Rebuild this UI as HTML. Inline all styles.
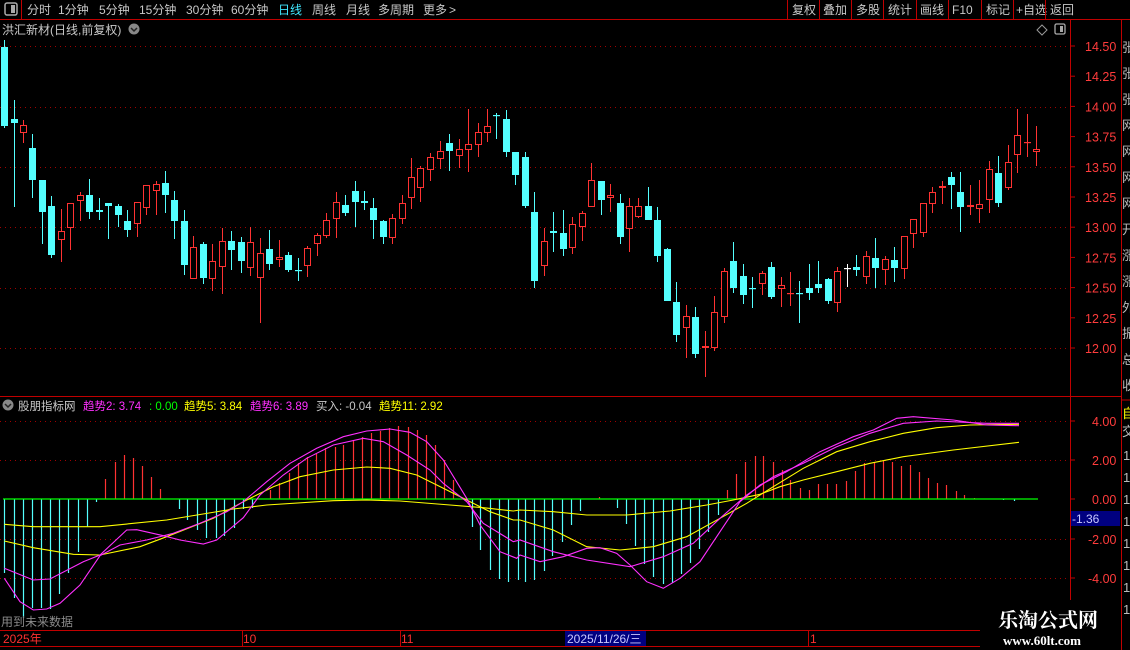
<!DOCTYPE html>
<html><head><meta charset="utf-8"><style>
html,body{margin:0;padding:0;background:#000;width:1130px;height:650px;overflow:hidden;font-family:"Liberation Sans","Noto Sans CJK SC",sans-serif}
svg{position:absolute;left:0;top:0}
</style></head><body>
<svg id="s" width="1130" height="650" xmlns="http://www.w3.org/2000/svg" font-family="Liberation Sans, Noto Sans CJK SC, sans-serif">
<rect width="1130" height="650" fill="#000"/>
<!-- toolbar -->
<line x1="0" y1="19.5" x2="1130" y2="19.5" stroke="#c00000"/>
<line x1="21.5" y1="0" x2="21.5" y2="19" stroke="#c00000"/>
<rect x="5" y="3" width="12" height="12" rx="2" fill="none" stroke="#aaa" stroke-width="1.5"/>
<rect x="11" y="5" width="4" height="8" fill="#aaa"/>
<g font-size="12" fill="#c8c8c8">
<text x="27" y="14">分时</text><text x="58" y="14">1分钟</text><text x="99" y="14">5分钟</text><text x="139" y="14">15分钟</text><text x="186" y="14">30分钟</text><text x="231" y="14">60分钟</text>
<text x="278" y="14" fill="#40e8ff">日线</text><text x="312" y="14">周线</text><text x="346" y="14">月线</text><text x="378" y="14">多周期</text><text x="423" y="14">更多</text><text x="449" y="14">&gt;</text>
<text x="792" y="14">复权</text><text x="823" y="14">叠加</text><text x="856" y="14">多股</text><text x="888" y="14">统计</text><text x="920" y="14">画线</text><text x="952" y="14">F10</text><text x="986" y="14">标记</text><text x="1016" y="14">+自选</text><text x="1050" y="14">返回</text>
</g>
<g stroke="#c00000"><line x1="787.5" y1="0" x2="787.5" y2="19"/><line x1="819.5" y1="0" x2="819.5" y2="19"/><line x1="851.5" y1="0" x2="851.5" y2="19"/><line x1="883.5" y1="0" x2="883.5" y2="19"/><line x1="916.5" y1="0" x2="916.5" y2="19"/><line x1="948.5" y1="0" x2="948.5" y2="19"/><line x1="981.5" y1="0" x2="981.5" y2="19"/><line x1="1013.5" y1="0" x2="1013.5" y2="19"/><line x1="1045.5" y1="0" x2="1045.5" y2="19"/></g>
<!-- title -->
<text x="2" y="34" font-size="12" fill="#c8c8c8">洪汇新材(日线,前复权)</text>
<circle cx="134" cy="29" r="5.5" fill="#888"/><path d="M131 28l3 3 3-3" stroke="#222" stroke-width="1.5" fill="none"/>
<path d="M1042 25l5 5-5 5-5-5z" fill="none" stroke="#999"/>
<rect x="1055" y="24" width="10" height="10" rx="1.5" fill="none" stroke="#aaa" stroke-width="1.3"/><rect x="1060" y="26" width="3" height="6" fill="#aaa"/>
<!-- frame lines -->
<line x1="1070.5" y1="20" x2="1070.5" y2="600" stroke="#c00000"/>
<line x1="1121.5" y1="20" x2="1121.5" y2="650" stroke="#c00000"/>
<line x1="0" y1="396.5" x2="1121" y2="396.5" stroke="#c00000"/>
<line x1="0" y1="630.5" x2="980" y2="630.5" stroke="#c00000"/>
<line x1="0" y1="646.5" x2="980" y2="646.5" stroke="#c00000"/>
<g id="grid"></g>
<g id="ax" font-size="12.5" fill="#ff3c3c"></g>
<g id="ind"></g>
<g id="cand"></g>
<!-- indicator header -->
<circle cx="8" cy="405" r="5.5" fill="#888"/><path d="M5 404l3 3 3-3" stroke="#222" stroke-width="1.5" fill="none"/>
<g font-size="11.5">
<text x="18" y="410" fill="#c8c8c8">股朋指标网</text>
<text x="83" y="410" fill="#ff30ff">趋势2: 3.74</text>
<text x="149" y="410" fill="#00ff00">: 0.00</text>
<text x="184" y="410" fill="#ffff00">趋势5: 3.84</text>
<text x="250" y="410" fill="#ff30ff">趋势6: 3.89</text>
<text x="316" y="410" fill="#c8c8c8">买入: -0.04</text>
<text x="379" y="410" fill="#ffff00">趋势11: 2.92</text>
</g>
<rect x="1071" y="511" width="49" height="15" fill="#000080"/>
<text x="1072" y="523" font-size="12" fill="#c8c8ff">-1.36</text>
<text x="1" y="626" font-size="12" fill="#8a8a8a">用到未来数据</text>
<!-- time axis -->
<g font-size="12" fill="#ff3030">
<text x="3" y="643">2025年</text><text x="243" y="643">10</text><text x="401" y="643">11</text><text x="810" y="643">1</text></g>
<line x1="242.5" y1="631" x2="242.5" y2="646" stroke="#c00000"/><line x1="400.5" y1="631" x2="400.5" y2="646" stroke="#c00000"/><line x1="808.5" y1="631" x2="808.5" y2="646" stroke="#c00000"/>
<rect x="565" y="631" width="81" height="15" fill="#000080"/>
<text x="567" y="643" font-size="12" fill="#c8c8ff">2025/11/26/三</text>
<!-- right strip -->
<g font-size="13" fill="#bbb"><text x="1122" y="52">张</text><text x="1122" y="78">张</text><text x="1122" y="104">张</text><text x="1122" y="130">网</text><text x="1122" y="156">网</text><text x="1122" y="182">网</text><text x="1122" y="208">网</text><text x="1122" y="234">开</text><text x="1122" y="260">涨</text><text x="1122" y="286">涨</text><text x="1122" y="312">外</text><text x="1122" y="338">振</text><text x="1122" y="364">总</text><text x="1122" y="390">收</text>
<text x="1122" y="418" fill="#ff0">自</text><text x="1122" y="436">交</text>
<text x="1123" y="460">1</text><text x="1123" y="482">1</text><text x="1123" y="504">1</text><text x="1123" y="526">1</text><text x="1123" y="548">1</text><text x="1123" y="570">1</text><text x="1123" y="592">1</text><text x="1123" y="614">1</text></g>
<line x1="1121" y1="400" x2="1130" y2="400" stroke="#c00000"/>
<rect x="985" y="601" width="136" height="49" fill="#000"/>
<text x="998" y="627" font-size="20" font-weight="bold" fill="#fff" font-family="Liberation Serif, Noto Serif CJK SC, serif">乐淘公式网</text>
<text x="1003" y="645" font-size="13" font-weight="bold" fill="#fff" font-family="Liberation Serif, serif">www.60lt.com</text>
</svg>
<script>
var NS="http://www.w3.org/2000/svg";
function el(p,t,a,txt){var e=document.createElementNS(NS,t);for(var k in a)e.setAttribute(k,a[k]);if(txt)e.textContent=txt;document.getElementById(p).appendChild(e);return e;}
[46,107,167,227,288,348,421,460,499,539,578].forEach(function(y){if(y!=499)el("grid","line",{x1:0,x2:1068,y1:y+.5,y2:y+.5,stroke:"#a00000","stroke-dasharray":"1 4"});});
var pl=["14.50","14.25","14.00","13.75","13.50","13.25","13.00","12.75","12.50","12.25","12.00"];
pl.forEach(function(t,i){var y=46+i*30.2;el("ax","text",{x:1085,y:y+5},t);el("ax","line",{x1:1071,x2:1075,y1:y,y2:y,stroke:"#c00000"});});
[["4.00",421],["2.00",460],["0.00",499],["-2.00",539],["-4.00",578]].forEach(function(a){el("ax","text",{x:a[0][0]=="-"?1088:1092,y:a[1]+5},a[0]);el("ax","line",{x1:1071,x2:1075,y1:a[1],y2:a[1],stroke:"#c00000"});});
// candles: x, bodyTop, bodyBot, wickTop, wickBot, color
var C=[[4,47,126,40,128,"c"],[14,119,123,100,207,"c"],[23,125,133,120,143,"r"],[32,148,180,134,198,"c"],[42,180,212,180,244,"c"],[51,206,255,196,258,"c"],[61,231,240,209,262,"r"],[70,203,228,203,250,"r"],[80,195,201,192,221,"r"],[89,195,212,179,219,"c"],[99,210,212,198,220,"c"],[108,203,206,203,239,"c"],[118,206,215,204,227,"c"],[127,221,230,210,237,"c"],[137,202,224,202,237,"r"],[146,185,208,185,215,"r"],[156,184,191,181,215,"r"],[165,183,195,171,213,"c"],[174,200,221,191,239,"c"],[184,221,265,210,275,"c"],[193,247,279,236,275,"r"],[203,244,278,242,284,"c"],[212,261,279,244,291,"r"],[222,241,267,228,294,"r"],[231,241,250,231,270,"c"],[241,242,261,237,273,"c"],[250,242,268,227,276,"r"],[260,253,278,238,323,"r"],[269,249,264,230,270,"c"],[279,257,260,240,267,"r"],[288,255,270,252,272,"c"],[298,270,271,258,281,"c"],[307,248,266,246,277,"r"],[317,235,244,233,256,"r"],[326,220,236,213,238,"r"],[336,202,219,192,238,"r"],[345,205,213,195,216,"c"],[355,191,202,181,227,"c"],[364,201,203,191,210,"c"],[373,208,220,198,239,"c"],[383,221,237,220,244,"c"],[392,218,238,214,244,"r"],[402,203,219,195,224,"r"],[411,177,198,158,209,"r"],[420,168,188,166,202,"r"],[430,157,170,153,181,"r"],[440,151,159,141,169,"r"],[449,143,151,134,171,"c"],[459,149,156,139,168,"r"],[468,144,150,109,172,"r"],[478,132,145,123,157,"r"],[487,126,133,109,142,"r"],[496,115,116,113,139,"c"],[506,119,152,110,157,"c"],[515,152,175,152,185,"c"],[525,157,206,152,208,"c"],[534,212,281,192,288,"c"],[544,241,266,228,276,"r"],[553,231,233,212,252,"c"],[563,233,249,210,256,"c"],[572,224,248,217,254,"r"],[582,213,227,211,241,"r"],[591,180,207,163,207,"r"],[601,181,200,181,215,"c"],[610,195,198,184,212,"r"],[620,203,237,194,244,"c"],[629,206,229,198,252,"r"],[638,206,217,198,218,"r"],[648,206,220,187,220,"c"],[657,220,256,207,262,"c"],[667,249,301,248,301,"c"],[676,302,335,282,342,"c"],[686,316,328,305,358,"r"],[695,317,354,307,358,"c"],[705,346,348,331,377,"r"],[714,312,348,296,351,"r"],[724,271,317,268,323,"r"],[733,261,288,242,293,"c"],[743,276,295,264,304,"c"],[752,288,289,277,308,"c"],[762,273,284,271,295,"r"],[771,267,297,262,299,"c"],[781,285,289,277,307,"r"],[790,293,294,272,306,"r"],[799,293,294,281,323,"c"],[809,288,293,264,300,"c"],[818,284,288,261,293,"c"],[828,279,301,278,304,"c"],[837,271,303,267,312,"r"],[847,268,268,264,287,"w"],[856,267,270,255,276,"c"],[866,256,277,251,284,"r"],[875,258,268,238,288,"c"],[885,259,270,256,285,"r"],[894,260,268,247,282,"c"],[904,236,269,236,279,"r"],[913,219,234,219,248,"r"],[923,203,233,203,237,"r"],[932,192,204,187,213,"r"],[942,186,188,181,204,"r"],[951,177,185,172,209,"c"],[960,192,207,172,232,"c"],[970,205,207,185,215,"r"],[979,204,209,180,223,"r"],[989,169,200,161,213,"r"],[998,173,203,156,207,"c"],[1008,162,188,145,190,"r"],[1017,135,155,109,173,"r"],[1027,142,143,114,157,"r"],[1036,149,152,126,166,"r"]];
var col={c:"#54ffff",r:"#ff3232",w:"#ffffff"};
C.forEach(function(d){var x=d[0]+.5,c=col[d[5]];
 el("cand","line",{x1:x,x2:x,y1:d[3],y2:d[4],stroke:c});
 var h=d[2]-d[1];
 if(h<2){el("cand","rect",{x:x-3.5,y:d[1],width:7,height:Math.max(h,1.2),fill:c});}
 else if(d[5]=="c"){el("cand","rect",{x:x-3.5,y:d[1],width:7,height:h,fill:c});}
 else{el("cand","rect",{x:x-3,y:d[1]+.5,width:6,height:h-1,fill:"#000",stroke:c});}
});
// histogram
var H=[[4,573],[14,598],[23,618],[32,608],[41,608],[50,609],[59,594],[68,573],[78,552],[87,527],[96,502],[105,479],[115,462],[124,455],[133,458],[142,466],[151,477],[160,489],[179,509],[187,520],[197,530],[206,538],[216,538],[224,536],[234,528],[243,509],[252,508],[270,490],[279,483],[289,473],[298,463],[307,457],[316,454],[325,448],[335,447],[343,445],[353,441],[362,437],[371,433],[380,431],[389,428],[398,426],[408,427],[417,430],[426,435],[435,445],[444,460],[453,480],[472,527],[480,550],[490,570],[499,579],[508,582],[518,580],
[525,582],[534,580],[544,571],[552,556],[562,542],[571,525],[580,511],[599,497],[617,508],[626,524],[635,546],[644,564],[653,577],[663,584],[672,583],[681,574],[690,563],[699,549],[708,532],[718,515],[727,490],[736,474],[745,462],[755,456],[763,456],[773,462],[782,470],[790,480],[800,488],[809,490],[818,484],[827,484],[836,484],[846,481],[855,471],[864,463],[874,462],[883,461],[892,462],[901,466],[910,465],[919,472],[928,478],[937,483],[946,485],[956,491],[964,495],[974,498],[1003,500],[1014,501]];
H.forEach(function(h){var x=h[0]+.5;el("ind","line",{x1:x,x2:x,y1:499,y2:h[1],stroke:h[1]<499?"#ff3232":"#54ffff","stroke-width":1.2});});
el("ind","line",{x1:3,x2:1038,y1:499,y2:499,stroke:"#00ff00","stroke-width":1.2});
function cv(a,b,c){var p=[];a.forEach(function(q){p.push((q[0]/3).toFixed(1)+","+(405+q[1]/3).toFixed(1));});b.forEach(function(q){p.push((520+q[0]/3).toFixed(1)+","+(405+q[1]/3).toFixed(1));});
 el("ind","polyline",{points:p.join(" "),fill:"none",stroke:c,"stroke-width":1.1});}
cv([[13,358],[100,365],[300,365],[500,345],[700,312],[800,300],[1000,287],[1100,285],[1200,288],[1350,300],[1450,308],[1540,318]],[[0,315],[100,320],[200,330],[320,330],[450,318],[560,300],[640,285],[720,268],[780,245],[850,225],[950,200],[1050,175],[1150,155],[1300,135],[1497,112]],"#ffff00");
cv([[13,408],[100,428],[220,448],[300,450],[420,425],[500,395],[640,340],[730,290],[820,245],[900,215],[1000,195],[1100,186],[1170,190],[1250,210],[1330,250],[1400,285],[1470,320],[1540,345]],[[0,345],[100,375],[200,425],[300,435],[400,425],[500,395],[600,340],[680,295],[760,245],[850,190],[950,140],[1050,110],[1150,85],[1250,68],[1350,60],[1497,58]],"#ffff00");
cv([[13,520],[60,590],[100,615],[140,612],[180,595],[240,540],[300,452],[360,420],[440,405],[520,385],[600,355],[680,320],[730,290],[800,230],[870,175],[950,130],[1030,95],[1100,78],[1170,72],[1230,82],[1280,110],[1330,165],[1400,280],[1440,360],[1500,440],[1550,460]],[[0,450],[60,470],[130,455],[200,430],[240,428],[290,445],[330,480],[380,530],[430,550],[480,520],[540,470],[600,380],[660,290],[720,240],[800,200],[900,140],[1000,95],[1060,75],[1130,40],[1180,35],[1300,45],[1400,60],[1497,62]],"#ff30ff");
cv([[13,490],[100,525],[150,522],[250,470],[300,450],[380,375],[410,374],[490,392],[540,405],[610,417],[650,405],[730,338],[780,270],[850,210],[920,160],[1000,120],[1090,100],[1150,110],[1220,150],[1290,195],[1330,235],[1400,290],[1450,355],[1540,410]],[[0,405],[100,440],[200,465],[330,485],[430,455],[520,415],[600,340],[680,270],[760,215],[850,175],[950,125],[1050,85],[1150,55],[1250,48],[1400,55],[1497,55]],"#ff30ff");
</script>
</body></html>
